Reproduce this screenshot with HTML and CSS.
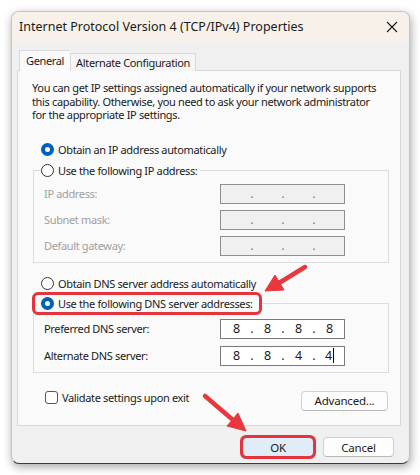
FILE: index.html
```html
<!DOCTYPE html>
<html>
<head>
<meta charset="utf-8">
<link rel="stylesheet" href="styles.css">
</head>
<body>
<div class="window">
  <div class="titlebar">
    <span class="title">Internet Protocol Version 4 (TCP/IPv4) Properties</span>
    <svg class="close" width="12" height="12" viewBox="0 0 12 12"><path d="M1 1 L11 11 M11 1 L1 11" stroke="#1a1a1a" stroke-width="1.1" fill="none"/></svg>
  </div>
  <div class="body">
    <div class="tabs">
      <div class="tab active">General</div>
      <div class="tab">Alternate Configuration</div>
    </div>
    <div class="panel">
      <p class="desc">You can get IP settings assigned automatically if your network supports<br>this capability. Otherwise, you need to ask your network administrator<br>for the appropriate IP settings.</p>
      <div class="radio-row r-first"><span class="radio on"></span><span>Obtain an IP address automatically</span></div>
      <fieldset class="group g-ip">
        <legend class="legend"><span class="radio"></span><span>Use the following IP address:</span></legend>
        <div class="row dis"><span class="lbl">IP address:</span><span class="ipfield off"><span class="seg"></span><span class="dot">.</span><span class="seg"></span><span class="dot">.</span><span class="seg"></span><span class="dot">.</span><span class="seg"></span></span></div>
        <div class="row dis"><span class="lbl">Subnet mask:</span><span class="ipfield off"><span class="seg"></span><span class="dot">.</span><span class="seg"></span><span class="dot">.</span><span class="seg"></span><span class="dot">.</span><span class="seg"></span></span></div>
        <div class="row dis"><span class="lbl">Default gateway:</span><span class="ipfield off"><span class="seg"></span><span class="dot">.</span><span class="seg"></span><span class="dot">.</span><span class="seg"></span><span class="dot">.</span><span class="seg"></span></span></div>
      </fieldset>
      <div class="radio-row r-dns"><span class="radio"></span><span>Obtain DNS server address automatically</span></div>
      <fieldset class="group g-dns">
        <legend class="legend hl"><span class="radio on"></span><span>Use the following DNS server addresses:</span></legend>
        <div class="row"><span class="lbl">Preferred DNS server:</span><span class="ipfield"><span class="seg">8</span><span class="dot">.</span><span class="seg">8</span><span class="dot">.</span><span class="seg">8</span><span class="dot">.</span><span class="seg">8</span></span></div>
        <div class="row"><span class="lbl">Alternate DNS server:</span><span class="ipfield"><span class="seg">8</span><span class="dot">.</span><span class="seg">8</span><span class="dot">.</span><span class="seg">4</span><span class="dot">.</span><span class="seg">4<span class="caret"></span></span></span></div>
      </fieldset>
      <div class="bottom-row">
        <label class="check"><span class="box"></span><span>Validate settings upon exit</span></label>
        <button class="btn adv">Advanced...</button>
      </div>
    </div>
    <div class="footer">
      <button class="btn ok">OK</button>
      <button class="btn cancel">Cancel</button>
    </div>
  </div>
</div>
<svg class="arrows" width="420" height="475" viewBox="0 0 420 475">
  <g fill="#e8383d" stroke="#e8383d">
    <line x1="305" y1="267" x2="279" y2="283" stroke-width="4.5" stroke-linecap="round"/>
    <polygon points="265,291 284,290 275,275" stroke-width="1" stroke-linejoin="round"/>
    <line x1="205" y1="396" x2="233" y2="420" stroke-width="4.5" stroke-linecap="round"/>
    <polygon points="246,431 227,426 238,413" stroke-width="1" stroke-linejoin="round"/>
  </g>
</svg>
</body>
</html>
```

FILE: styles.css
```css
* { box-sizing: border-box; }
html, body { margin: 0; padding: 0; }
body {
  width: 420px;
  height: 475px;
  background: #ffffff;
  font-family: "Noto Sans", "Open Sans", sans-serif;
  font-size: 11px;
  letter-spacing: -0.35px;
  color: #1a1a1a;
  position: relative;
  overflow: hidden;
  padding: 11px 0 0 11px;
}
.window {
  width: 399px;
  height: 453px;
  border: 1px solid #c4c4c4;
  border-bottom-color: #3a3a3a;
  border-radius: 8px;
  background: #f0f0f0;
  box-shadow: 1px 3px 10px rgba(0,0,0,0.35);
  overflow: hidden;
  display: flex;
  flex-direction: column;
}
.titlebar {
  height: 30px;
  flex: none;
  background: #f7f1e9;
  display: flex;
  align-items: center;
  justify-content: space-between;
  padding: 0 11px 1px 7px;
}
.title { font-size: 12.5px; letter-spacing: 0; color: #1a1a1a; white-space: nowrap; }
.close { display: block; }
.body {
  flex: 1;
  padding: 8px 8px 0 5px;
  display: flex;
  flex-direction: column;
}
.tabs {
  display: flex;
  align-items: flex-end;
  padding-left: 2px;
  height: 21px;
  position: relative;
  z-index: 1;
  margin-bottom: -1px;
}
.tab {
  height: 18px;
  padding: 0 5px;
  border: 1px solid #d9d9d9;
  border-bottom: none;
  background: #f5f5f5;
  display: flex;
  align-items: center;
  white-space: nowrap;
}
.tab.active {
  height: 21px;
  background: #fafafa;
  padding: 0 6px 2px 6px;
  border-right: none;
}
.panel {
  height: 356px;
  border: 1px solid #d9d9d9;
  background: #fafafa;
  padding: 10px 11px 13px 14px;
  display: flex;
  flex-direction: column;
}
.desc {
  margin: 0;
  line-height: 13.5px;
  white-space: nowrap;
}
.radio-row {
  height: 16px;
  display: flex;
  align-items: center;
  padding-left: 9px;
  white-space: nowrap;
}
.r-first { margin-top: 20px; }
.r-dns { margin-top: 13px; }
.radio {
  width: 13px;
  height: 13px;
  border-radius: 50%;
  border: 1px solid #333;
  background: #fff;
  margin-right: 4px;
  flex: none;
  position: relative;
}
.radio.on {
  border: none;
  background: #005fb8;
}
.radio.on::after {
  content: "";
  position: absolute;
  left: 4px; top: 4px;
  width: 5px; height: 5px;
  border-radius: 50%;
  background: #fff;
}
.group {
  margin: 5px 0 0 1px;
  border: 1px solid #dcdcdc;
  padding: 5px 10px 6px 10px;
  display: flex;
  flex-direction: column;
  gap: 6px;
  min-width: 0;
}
.legend {
  display: flex;
  align-items: center;
  height: 16px;
  padding: 0 3px 0 0;
  margin-left: -3px;
  white-space: nowrap;
}
.g-dns { margin-top: 3px; padding-top: 7px; gap: 7px; }
.legend.hl {
  height: 17px;
  margin-left: -9px;
  padding: 0 6px 0 6px;
  border-radius: 3px;
  outline: 3px solid #e5343b;
  outline-offset: 0;
}
.row {
  height: 20px;
  display: flex;
  align-items: center;
  justify-content: space-between;
  white-space: nowrap;
}
.row.dis .lbl { color: #a0a0a0; }
.ipfield {
  width: 125px;
  height: 20px;
  border: 1px solid #7a7a7a;
  background: #fff;
  display: flex;
  align-items: center;
  padding: 0 2px 0 3px;
  margin-right: 33px;
  letter-spacing: 0;
}
.ipfield.off {
  background: #f0f0f0;
  border-color: #8e8e8e;
}
.seg {
  width: 25px;
  text-align: center;
  display: flex;
  justify-content: center;
  align-items: center;
  font-size: 12.5px;
}
.dot {
  width: 6px;
  text-align: center;
  font-size: 12.5px;
}
.ipfield.off .dot { color: #7a7a9a; }
.caret {
  display: inline-block;
  width: 1px;
  height: 15px;
  background: #000;
  margin-left: 1px;
}
.bottom-row {
  margin-top: 18px;
  height: 20px;
  display: flex;
  align-items: center;
  justify-content: space-between;
}
.check {
  display: flex;
  align-items: center;
  margin-left: 13px;
  margin-top: -7px;
  white-space: nowrap;
}
.box {
  width: 13px;
  height: 13px;
  border: 1px solid #555;
  border-radius: 3px;
  background: #fff;
  margin-right: 4px;
}
.btn {
  font-family: "Noto Sans", "Open Sans", sans-serif;
  font-size: 11.5px;
  letter-spacing: -0.2px;
  color: #1a1a1a;
  height: 20px;
  background: #fdfdfd;
  border: 1px solid #d0d0d0;
  border-bottom-color: #b8b8b8;
  border-radius: 4px;
  padding: 0;
  display: flex;
  align-items: center;
  justify-content: center;
}
.adv { width: 87px; margin-right: 1px; }
.footer {
  display: flex;
  justify-content: flex-end;
  gap: 9px;
  padding: 11px 7px 0 0;
}
.ok {
  width: 72px;
  background: #e0ecf8;
  border-color: #0067c0;
  outline: 3px solid #e5343b;
  outline-offset: -1px;
  border-radius: 4px;
}
.cancel { width: 71px; }
.arrows {
  position: absolute;
  left: 0;
  top: 0;
  pointer-events: none;
}
```
